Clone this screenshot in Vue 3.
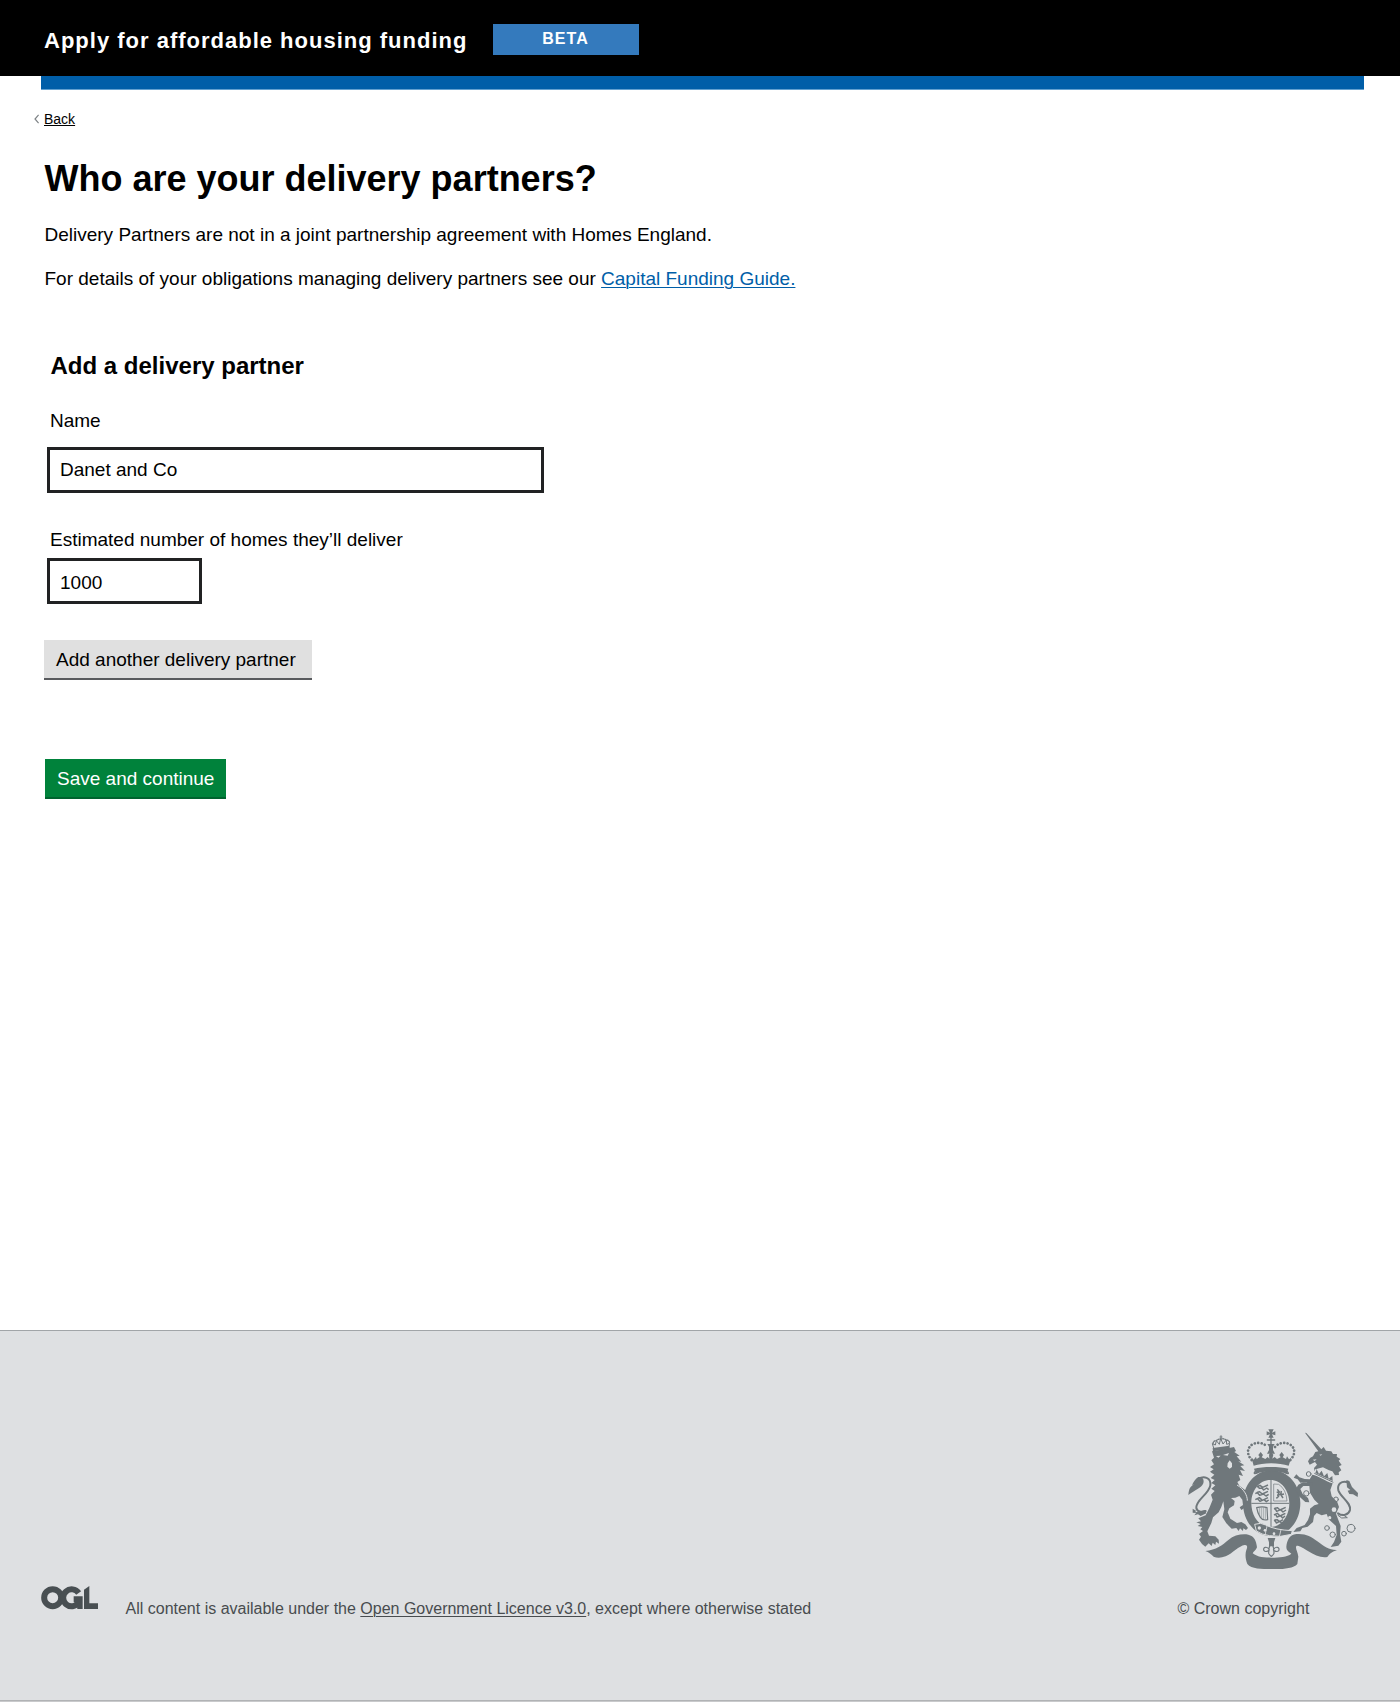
<script setup>
import { ref } from 'vue'

const partnerName = ref('Danet and Co')
const homes = ref('1000')

const chains = [
  { x: 386, y: 162, r: 7 },
  { x: 379, y: 220, r: 8 },
  { x: 468, y: 238, r: 7 },
  { x: 441, y: 324, r: 7 },
  { x: 458, y: 344, r: 8 },
  { x: 492, y: 341, r: 7 },
  { x: 513, y: 325, r: 12 }
]
</script>

<template>
  <div class="page">
    <header class="header">
      <span class="title">Apply for affordable housing funding</span>
      <span class="phase">BETA</span>
    </header>
    <div class="bar"></div>

    <main class="main">
      <a class="back" href="#">
        <svg width="5" height="10" viewBox="0 0 5 10"><path d="M4.6 .8 1 5l3.6 4.2" fill="none" stroke="#7c8184" stroke-width="1.2" /></svg>
        <span>Back</span>
      </a>
      <h1>Who are your delivery partners?</h1>
      <p>Delivery Partners are not in a joint partnership agreement with Homes England.</p>
      <p>For details of your obligations managing delivery partners see our <a class="link" href="#">Capital Funding Guide.</a></p>

      <form class="form" @submit.prevent>
        <h2>Add a delivery partner</h2>
        <label for="partner-name">Name</label>
        <input id="partner-name" v-model="partnerName" class="field wide" type="text" />
        <label class="second" for="homes">Estimated number of homes they’ll deliver</label>
        <input id="homes" v-model="homes" class="field narrow" type="text" />
        <button class="button grey" type="button">Add another delivery partner</button>
        <button class="button green" type="submit">Save and continue</button>
      </form>
    </main>

    <footer class="footer">
      <div class="crest-row">
        <svg class="crest" width="200" height="160" viewBox="0 0 600 480">
          <g fill="#6f777b" stroke="none">
            <!-- ribbon -->
            <path d="M76 393C108 390 128 375 145 360C163 345 185 341 205 344C222 348 229 362 231 382C228 392 220 395 218 400C232 412 255 413 275 413C298 413 322 411 334 401C328 395 319 393 319 380C321 360 329 344 349 342C378 340 392 349 412 364C433 380 448 391 471 390C457 395 450 400 442 411C423 414 403 406 385 394C371 385 360 377 350 377C344 383 353 393 355 410L352 432C340 447 302 448 274 447C245 447 214 447 202 432C196 418 195 402 199 390C204 380 201 374 194 375C177 377 158 400 137 409C123 414 111 414 101 410C94 403 87 397 76 393Z" />
            <!-- garter ring -->
            <path fill-rule="evenodd" d="M275 151C325 151 361 196 361 249C361 304 325 348 275 348C225 348 189 304 189 249C189 196 225 151 275 151ZM271 180C238 180 214 211 214 250C214 289 238 321 271 321C304 321 328 289 328 250C328 211 304 180 271 180Z" />
            <!-- lion -->
            <path d="M96 94L122 89L162 81L168 93L163 96L179 107L170 109L184 125L175 124L193 136L181 138L195 153L180 150L189 168L176 164L181 180L172 186L178 197L199 213L207 232L203 247L213 258L214 269L207 263L208 272L201 266L199 273L192 265L184 270L179 262L189 255L187 239L178 228L166 233L153 234L164 243L162 256L148 265L143 277L151 296L171 309L184 306L196 313L204 324L198 330L190 325L189 333L180 325L176 333L169 324L155 326L139 310L127 291L133 268L130 244L124 261L116 277L99 292L94 309L82 334L87 347L106 349L116 359L117 371L108 365L106 375L98 368L95 378L86 370L76 380L66 372L57 359L63 350L57 342L69 333L61 328L67 321L53 318L62 312L49 307L63 304L55 295L77 286L88 264L98 239L93 224L104 213L94 206L106 196L94 189L104 180L92 174L103 164L90 155L101 148L90 141L102 133L94 121L102 113Z" />
            <path d="M55 171C65 169 74 176 70 190C64 205 45 210 25 225C27 206 30 200 43 193L36 195C42 182 48 176 55 171Z" />
            <path d="M38 266L48 272L46 277L57 275L75 270L79 280L62 288L54 283L43 286L48 279L38 278Z" />
            <!-- lion crown -->
            <path d="M98 84L148 77L150 87L99 94Z" />
            <!-- unicorn head -->
            <path d="M375 38L379 39L424 88L431 81L438 92L454 94L459 102L471 102L470 110L481 117L476 122L485 135L477 139L484 151L476 157L477 165L465 166L457 154L447 151L429 142L412 146L404 154L402 144L411 134L405 126L389 134L384 124L390 114L399 109L406 96L415 94Z" />
            <!-- unicorn body -->
            <path d="M397 164C414 166 435 183 458 190L451 210L455 229L472 247L477 261L468 281L476 302L482 318L480 343L484 365L475 377L452 381L462 366L470 345L468 318L446 298L440 282L425 286L410 279L402 288L399 306L383 320L367 324L361 334L340 336L350 324L374 315L384 300L390 283L390 266L403 256L416 252L403 239L390 218L388 198L380 186L361 188L353 178L341 173L349 163L358 172L374 177L389 178Z" />
            <path d="M397 198L370 198L361 207L368 222L384 234L388 247L376 246L357 229L346 209L355 194L369 187L397 187Z" />
            <path d="M499 180L508 183L516 201L534 219L533 231L519 223L508 222L503 212L511 210L501 202Z" />
            <!-- crown -->
            <path d="M222 146C248 139 298 139 325 146L320 161C298 151 252 151 227 161Z" />
            <path d="M265 28H281L276 38L286 34V46L276 43L281 53H265L270 43L260 46V34L270 38Z" />
            <path d="M214 112L221 119L228 110L230 117L239 111L235 105L242 96L249 105L245 112L256 117L263 111L268 116L267 104L273 96L280 104L277 116L284 111L291 117L302 112L298 105L305 96L312 105L308 112L318 117L321 109L328 119L334 112L326 137C297 127 249 127 221 137Z" />
            <path d="M262 72H284L279 80V90L285 101H261L267 90V80Z" />
            <!-- pendant -->
            <path d="M263 354H286L282 367V379H267V367Z" />
          </g>

          <g fill="none" stroke="#6f777b" stroke-linecap="round">
            <path stroke-width="6" d="M55 178C70 166 94 172 91 196C86 224 47 239 49 264C51 275 64 278 77 273" />
            <path stroke-width="6" d="M504 187C484 181 471 193 475 211C483 233 514 248 510 270C506 286 487 289 474 280" />
            <path stroke-width="3" d="M487 283L502 293L485 294L474 286" />
            <path stroke-width="8" stroke-dasharray=".1 10.2" d="M215 120C190 92 212 66 239 69Q253 70 261 81M331 120C357 92 335 66 308 69Q294 70 285 81" />
            <path stroke-width="4" d="M262 60H284M273 48V116" />
            <path stroke-width="4" d="M225 155C218 164 229 160 235 157M321 154C331 164 320 162 313 156" />
            <path stroke-width="3" d="M101 84L97 71L106 75L109 62L118 73L122 55L129 72L139 60L140 73L149 70L147 79M120 51H126M123 47V54" />
            <path stroke-width="4" stroke-dasharray="3 4" d="M99 70Q101 61 109 62Q116 55 122 58Q130 54 137 59Q147 60 149 69" />
            <circle v-for="(c, i) in chains" :key="i" :cx="c.x" :cy="c.y" :r="c.r" stroke-width="3" />
            <!-- fleur-de-lis pendant -->
            <path stroke-width="3.5" d="M274 371C268 378 265 384 268 390C261 376 247 382 252 392C257 398 263 393 267 391C264 402 268 404 274 409C280 404 284 402 281 391C285 393 291 398 296 392C301 382 287 376 280 390C283 384 280 378 274 371" />
          </g>

          <!-- quartered shield -->
          <g fill="none" stroke="#6f777b" stroke-width="3">
            <path d="M273 180V321M214 250H328" />
            <path stroke-width="4.5" stroke-linejoin="round" d="M230 201L240 196L248 202L264 195M233 197L238 205L246 204L251 210L260 204L266 209M226 221L238 215L247 222L264 214M230 216L239 226L250 222L258 228L266 223M226 239L238 233L247 241L264 233M231 235L240 244L252 239L259 245L266 240" />
            <path stroke-width="4.5" stroke-linejoin="round" d="M282 267L292 263L300 270L317 262M284 263L290 274L302 269L309 276L318 270M282 285L292 280L300 288L316 280M286 281L291 291L302 287L308 294L315 288M282 303L291 299L299 305L309 299M284 298L289 309L299 304L305 309" />
            <path stroke-width="2" d="M281 192V243H321Q319 208 296 193Z" />
            <path stroke-width="4.5" stroke-linejoin="round" d="M292 208L298 216L293 226L302 223L309 234M289 235L297 228M304 213L302 224L312 222M290 217L298 217" />
            <path stroke-width="3.5" d="M230 263Q247 258 261 263L263 299Q248 303 241 292Q232 278 230 263Z" />
            <path stroke-width="1.5" d="M238 263V283M244 263V293M250 263V298M256 263V299" />
          </g>

          <!-- crown details, buckle and highlights -->
          <g fill="#dee0e2" stroke="none">
            <path d="M129 105L147 99L143 107ZM108 108L122 107L115 113ZM143 130L149 121L156 130L156 141L149 146L142 140Z" />
            <path d="M398 119L410 118L404 123ZM418 104L427 103L422 107Z" />
            <circle cx="462" cy="269" r="7" />
            <circle cx="449" cy="293" r="5" />
          </g>
          <path d="M171 195C191 207 202 225 202 242" fill="none" stroke="#dee0e2" stroke-width="3" />
          <path d="M224 313Q243 306 257 315Q285 330 337 332L334 343Q301 353 269 347Q244 344 229 333Z" fill="#6f777b" stroke="#dee0e2" stroke-width="3" />
          <path d="M261 318L255 346M303 329L298 350" fill="none" stroke="#dee0e2" stroke-width="2.5" />
          <g fill="#dee0e2"><circle cx="238" cy="324" r="5" /><circle cx="255" cy="331" r="4" /><circle cx="282" cy="341" r="4" /></g>
          <path d="M406 147L462 170L464 192L401 163Z" fill="#dee0e2" />
          <path d="M403 160L460 187" fill="none" stroke="#6f777b" stroke-width="3" />
          <path d="M406 159L410 148L417 162L425 152L432 169L442 159L446 176L457 168L458 183Z" fill="#6f777b" />
        </svg>
      </div>
      <div class="legal">
        <svg class="ogl" width="58" height="26" viewBox="0 0 174 78">
          <g fill="none" stroke="#484f52" stroke-width="18">
            <circle cx="35" cy="38" r="25.5" />
            <path d="M113 24A25.5 25.5 0 1 0 113 53" />
          </g>
          <path d="M98 34H125V72H109L108 60L98 50ZM129 14L145 3V55H171V72H129Z" fill="#484f52" />
        </svg>
        <p class="licence">All content is available under the <a href="#">Open Government Licence v3.0</a>, except where otherwise stated</p>
        <p class="copyright">© Crown copyright</p>
      </div>
    </footer>
  </div>
</template>

<style>
body {
  margin: 0;
}
</style>

<style scoped>
.page {
  width: 1400px;
  height: 1702px;
  display: flex;
  flex-direction: column;
  overflow: hidden;
  background: #fff;
  color: #000;
  font-family: "Liberation Sans", Arial, sans-serif;
  font-size: 19px;
  line-height: 23px;
}
.page * {
  box-sizing: border-box;
}
h1, h2, p {
  margin: 0;
  padding-left: 0.5px;
}
.header {
  flex: none;
  height: 76px;
  padding-left: 44px;
  display: flex;
  align-items: flex-start;
  background: #000;
  color: #fff;
  font-weight: bold;
}
.title {
  width: 449px;
  margin-top: 28px;
  font-size: 22px;
  line-height: 25px;
  letter-spacing: 1px;
}
.phase {
  width: 146px;
  height: 31px;
  margin-top: 24px;
  padding: 5px 1px 0 0;
  background: #347abd;
  font-size: 16px;
  line-height: 19px;
  letter-spacing: 1px;
  text-align: center;
}
.bar {
  flex: none;
  height: 14px;
  margin: 0 36px 0 41px;
  background: #005ea8;
  border-bottom: 1px solid #62a0d0;
}
.main {
  flex: 1;
  padding: 21px 44px 0;
  display: flex;
  flex-direction: column;
  align-items: flex-start;
}
.back {
  margin-left: -10px;
  display: flex;
  align-items: center;
  gap: 5px;
  color: #000;
  font-size: 14px;
  line-height: 16px;
  text-decoration: none;
}
.back span {
  text-decoration: underline;
  text-decoration-thickness: 1px;
  text-underline-offset: 1px;
}
h1 {
  margin: 31px 0 24px;
  font-size: 36px;
  line-height: 41px;
}
p + p {
  margin-top: 21px;
}
.link {
  color: #005ea8;
  text-decoration-thickness: 1px;
  text-underline-offset: 2px;
}
.form {
  margin-top: 62px;
  display: flex;
  flex-direction: column;
  align-items: flex-start;
}
h2 {
  margin: 0 0 30px 6px;
  font-size: 24px;
  line-height: 27px;
}
label {
  margin: 0 0 15px 6px;
}
label.second {
  margin: 35px 0 7px 6px;
}
.field {
  height: 46px;
  margin-left: 3px;
  padding: 0 10px;
  border: 3px solid #212223;
  border-radius: 0;
  background: #fff;
  color: #000;
  font: inherit;
  outline: none;
}
.wide {
  width: 497px;
  padding-bottom: 1px;
}
.narrow {
  width: 155px;
  padding-top: 3px;
}
.button {
  height: 40px;
  padding: 0 0 0 12px;
  border: 0;
  font: inherit;
  text-align: left;
}
.grey {
  width: 268px;
  margin-top: 36px;
  background: #e0e0e0;
  border-bottom: 2px solid #595b5e;
  color: #000;
}
.green {
  width: 181px;
  margin: 79px 0 0 1px;
  background: #00823b;
  border-bottom: 2px solid #00632e;
  color: #fff;
}
.footer {
  flex: none;
  height: 372px;
  display: flex;
  flex-direction: column;
  border-top: 1px solid #a1a5a8;
  border-bottom: 1px solid #c9cacc;
  background: #dee0e2;
  color: #484c4f;
  font-size: 16px;
  line-height: 19px;
}
.crest-row {
  height: 160px;
  margin: 89px 20px 0 0;
  display: flex;
  justify-content: flex-end;
}
.legal {
  flex: 1;
  padding: 5px 0 0 41px;
  display: flex;
  align-items: flex-start;
  border-bottom: 1px solid #b1b3b5;
}
.licence {
  width: 1052px;
  margin: 14px 0 0 26px;
}
.licence a {
  color: inherit;
  text-decoration-thickness: 1px;
  text-underline-offset: 2px;
}
.legal .copyright {
  margin-top: 14px;
}
</style>
